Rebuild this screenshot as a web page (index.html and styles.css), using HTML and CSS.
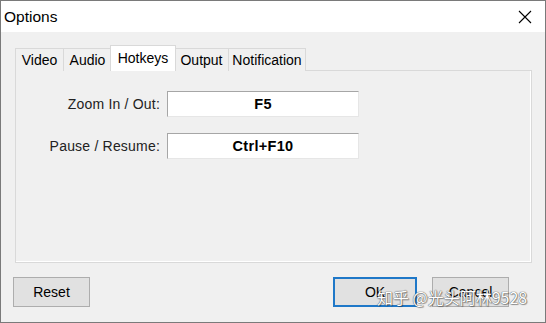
FILE: index.html
```html
<!DOCTYPE html>
<html lang="en">
<head>
    <meta charset="UTF-8">
    <title>Options</title>
    <link rel="stylesheet" href="styles.css">
</head>
<body>
    <div class="window">
        <div class="titlebar">
            <span class="title">Options</span>
            <svg class="close" width="14" height="14" viewBox="0 0 14 14">
                <path d="M1 1 L13 13 M13 1 L1 13" stroke="#000" stroke-width="1.1" fill="none"/>
            </svg>
        </div>

        <div class="content">
            <div class="tabs">
                <div class="tab video">Video</div>
                <div class="tab audio">Audio</div>
                <div class="tab hotkeys-tab active">Hotkeys</div>
                <div class="tab output">Output</div>
                <div class="tab notification">Notification</div>
            </div>

            <div class="panel">
                <div class="hotkeys">
                    <label>Zoom In / Out:</label>
                    <div class="field">F5</div>
                    <label>Pause / Resume:</label>
                    <div class="field">Ctrl+F10</div>
                </div>
            </div>

            <div class="buttons">
                <button class="btn">Reset</button>
                <div class="right">
                    <button class="btn default">OK</button>
                    <button class="btn">Cancel</button>
                </div>
                <span class="watermark">知乎 @光头阿林9528</span>
            </div>
        </div>
    </div>
</body>
</html>
```

FILE: styles.css
```css
body {
    margin: 0;
    font-family: "Liberation Sans", Arial, "Noto Sans CJK SC", sans-serif;
    font-size: 13.5px;
    color: #000;
}

.window {
    width: 546px;
    height: 323px;
    box-sizing: border-box;
    border: 1px solid #7a7a7a;
    background: #f0f0f0;
    display: flex;
    flex-direction: column;
}

.titlebar {
    height: 31px;
    background: #fff;
    display: flex;
    align-items: center;
    justify-content: space-between;
    padding: 0 13px 0 3px;
}

.title {
    font-size: 15.5px;
    margin-top: 1px;
}

.close {
    margin-top: 1px;
}

.content {
    flex: 1;
    padding: 14px 13px 0 14px;
    display: flex;
    flex-direction: column;
}

.tabs {
    display: flex;
    align-items: flex-end;
    height: 25px;
    position: relative;
    z-index: 1;
    margin-bottom: -1px;
}

.tab {
    box-sizing: border-box;
    height: 23px;
    line-height: 22px;
    text-align: center;
    border: 1px solid #d9d9d9;
    border-bottom: none;
    margin-right: -1px;
    background: #f0f0f0;
    font-size: 14px;
}

.video { width: 49px; }
.audio { width: 49px; }
.output { width: 55px; }
.notification { width: 78px; }

.tab.active {
    width: 66px;
    height: 26px;
    line-height: 24px;
    background: #fff;
    margin: 0 -2px 0 -1px;
    position: relative;
    z-index: 2;
    font-size: 14px;
}

.panel {
    height: 191px;
    border: 1px solid #d9d9d9;
    box-shadow: inset -1px -1px 0 #fff;
    background: #f0f0f0;
}

.hotkeys {
    display: grid;
    grid-template-columns: 144px 192px;
    grid-auto-rows: 26px;
    column-gap: 7px;
    row-gap: 16px;
    padding-top: 20px;
}

.hotkeys label {
    display: flex;
    align-items: center;
    justify-content: flex-end;
    color: #222;
    font-size: 14px;
    letter-spacing: 0.2px;
}

.field {
    background: #fff;
    border-top: 1px solid #a6a6a6;
    border-left: 1px solid #a6a6a6;
    border-right: 1px solid #e6e6e6;
    border-bottom: 1px solid #e6e6e6;
    display: flex;
    align-items: center;
    justify-content: center;
    font-weight: bold;
    font-size: 14.5px;
    letter-spacing: 0.3px;
}

.buttons {
    display: flex;
    justify-content: space-between;
    margin: 14px 0 0 -2px;
    padding-right: 23px;
    position: relative;
}

.right {
    display: flex;
    gap: 15px;
}

.btn {
    width: 77px;
    height: 30px;
    font-family: inherit;
    font-size: 14px;
    background: #e1e1e1;
    border: 1px solid #adadad;
    color: #000;
    padding: 0;
}

.btn.default {
    width: 84px;
    border: 2px solid #1f78c8;
}

.watermark {
    position: absolute;
    left: 364px;
    top: 8px;
    font-family: "Noto Sans CJK SC", sans-serif;
    font-size: 16px;
    color: #fff;
    text-shadow: 0 0 1px #555, 0 0 1px #555, 1px 1px 1px rgba(0, 0, 0, 0.35);
    white-space: nowrap;
}
```
